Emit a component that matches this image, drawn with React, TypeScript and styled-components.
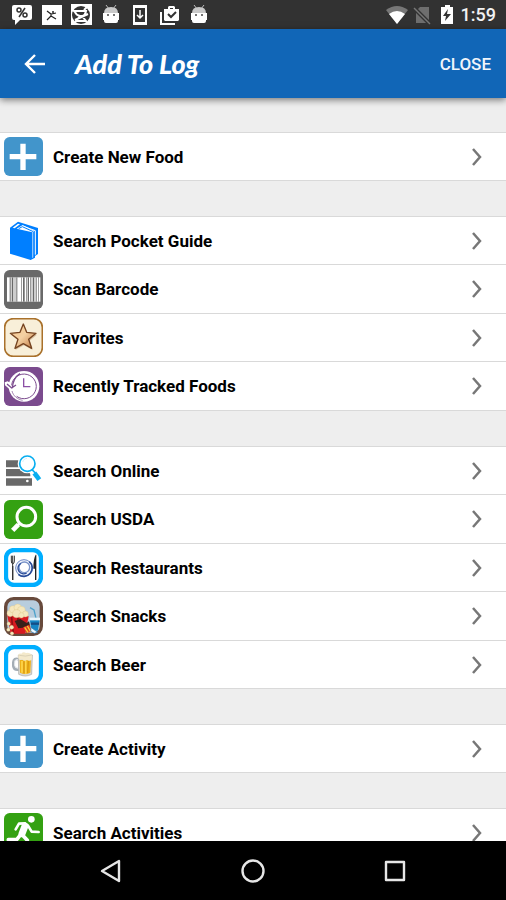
import React from 'react';
import styled, { createGlobalStyle } from 'styled-components';

const GlobalStyle = createGlobalStyle`
  * { box-sizing: border-box; }
  body { margin: 0; background: #000; font-family: Roboto, 'Liberation Sans', sans-serif; }
`;

const Screen = styled.div`
  display: flex;
  flex-direction: column;
  height: 100vh;
  background: #eeeeee;
`;

const StatusBar = styled.div`
  display: flex;
  flex: none;
  align-items: center;
  justify-content: space-between;
  height: 29px;
  padding: 0 10px 0 11px;
  background: #323232;
  color: #fff;
`;

const Notifications = styled.div`
  display: flex;
  justify-content: space-between;
  width: 199px;
`;

const SystemStatus = styled.div`
  display: flex;
  align-items: center;
  gap: 3px;
`;

const StatusIcon = styled.svg`
  display: block;
  width: 22px;
  height: 22px;
`;

const Clock = styled.time`
  font-size: 18px;
  line-height: 24px;
  font-weight: 500;
  color: #f2f2f2;
`;

const AppBar = styled.header`
  display: flex;
  flex: none;
  align-items: center;
  height: 69px;
  padding: 0 15px;
  background: #1166b7;
  color: #fff;
  box-shadow: 0 2px 7px rgba(0, 0, 0, 0.5);
  z-index: 1;
`;

const IconButton = styled.button`
  display: grid;
  place-items: center;
  width: 40px;
  height: 40px;
  padding: 0;
  border: 0;
  background: none;
  color: inherit;
  cursor: pointer;
`;

const Title = styled.h1`
  flex: 1;
  margin: 0 0 0 20px;
  font-family: Lato, 'Open Sans', sans-serif;
  font-size: 27px;
  line-height: 32px;
  font-weight: 900;
  font-style: italic;
`;

const CloseButton = styled.button`
  padding: 0;
  border: 0;
  background: none;
  color: #f0f5fb;
  font: 500 17px/24px Roboto, sans-serif;
  cursor: pointer;
`;

const Content = styled.main`
  display: flex;
  flex: 1;
  flex-direction: column;
  gap: 35px;
  min-height: 0;
  padding-top: 34px;
  overflow-y: auto;
  scrollbar-width: none;
`;

const Group = styled.ul`
  flex: none;
  margin: 0;
  padding: 0;
  list-style: none;
  background: #fff;
  border-top: 1px solid #d9d9d9;
`;

const Item = styled.li`
  height: 48px;
  border-bottom: 1px solid #d9d9d9;
  &:nth-child(even) { height: 49px; }
`;

const RowButton = styled.button`
  display: flex;
  align-items: center;
  width: 100%;
  height: 100%;
  padding: 0 24px 0 4px;
  border: 0;
  background: none;
  color: #000;
  text-align: left;
  cursor: pointer;
`;

const RowIcon = styled.svg`
  flex: none;
  width: 39px;
  height: 39px;
`;

const Label = styled.span`
  flex: 1;
  margin-left: 10px;
  font: 700 17px/24px Roboto, sans-serif;
`;

const NavBar = styled.nav`
  display: flex;
  flex: none;
  align-items: center;
  justify-content: space-around;
  height: 59px;
  padding: 0 40px;
  background: #000;
  color: #e6e6e6;
`;

const Tile = ({ fill, children }: { fill: string; children: React.ReactNode }) => (
  <RowIcon viewBox="0 0 117 117" aria-hidden="true">
    <rect width="117" height="117" rx="17" fill={fill} />
    {children}
  </RowIcon>
);

const FramedTile = ({ children }: { children: React.ReactNode }) => (
  <RowIcon viewBox="0 0 117 117" aria-hidden="true">
    <rect x="6" y="6" width="105" height="105" rx="24" fill="#fff" stroke="#00aeff" strokeWidth="13" />
    {children}
  </RowIcon>
);

const PlusIcon = () => (
  <Tile fill="#4295cb">
    <path d="M49 20h16v31h32v16H65v32H49V67H17V51h32z" fill="#fff" />
  </Tile>
);

const BookIcon = () => (
  <RowIcon viewBox="0 0 117 117" aria-hidden="true">
    <path d="M18 20 42 2 102 21V99L93 105V110L80 117 18 98Z" fill="#007fff" />
    <path d="M26 20 42 8 48 10 32 22ZM38 23 56 12 90 29 90 108 85 111 85 34Z" fill="#fff" />
    <path d="M48 22 59 16 94 29 94 101" fill="none" stroke="#fff" strokeWidth="3" />
    <path d="M44 23 55 17 88 32V111" fill="none" stroke="#007fff" strokeWidth="3" />
  </RowIcon>
);

const BarcodeIcon = () => (
  <Tile fill="#696969">
    <rect x="9" y="22" width="100" height="73" fill="#fff" />
    <g fill="#696969">
      {[[17, 3], [23, 5], [32, 2], [37, 3], [52, 2], [57, 5], [66, 2], [71, 4], [79, 3], [86, 5], [95, 3], [102, 2]].map(
        ([x, w]) => <rect key={x} x={x} y="22" width={w} height="73" />
      )}
    </g>
  </Tile>
);

const StarIcon = () => (
  <RowIcon viewBox="0 0 117 117" aria-hidden="true">
    <defs>
      <linearGradient id="star" x1="0" y1="0" x2="1" y2="1">
        <stop offset="0" stopColor="#f7c88e" />
        <stop offset=".5" stopColor="#f4d1a3" />
        <stop offset="1" stopColor="#bd7139" />
      </linearGradient>
    </defs>
    <rect x="2" y="2" width="113" height="113" rx="26" fill="#f8efd9" stroke="#a9712b" strokeWidth="5" />
    <path d="M61 23 72 47 99 50 77 68 86 96 60 82 34 96 44 68 21 50 49 47Z" fill="#c9ad88" opacity=".7" />
    <path d="M58 18 68 43 96 46 74 64 83 91 58 77 33 91 42 64 19 46 48 43Z" fill="url(#star)" stroke="#754421" strokeWidth="4" strokeLinejoin="round" />
  </RowIcon>
);

const HistoryIcon = () => (
  <Tile fill="#7b4b8e">
    <circle cx="60" cy="58" r="46" fill="#fff" />
    <path d="M2 46 11 43 19 48 32 36 36 63 22 71 3 55Z" fill="#fff" />
    <path d="M23 55A37 37 0 1 1 38 88" fill="none" stroke="#7b4b8e" strokeWidth="3" />
    <path d="M9 51 23 63 36 54M25 64C26 43 35 28 48 20" fill="none" stroke="#7b4b8e" strokeWidth="4" />
    <path d="M59 34V59H79" fill="none" stroke="#8b4fa5" strokeWidth="4" />
    <path d="M24 72C28 87 40 97 56 100" fill="none" stroke="#7b4b8e" strokeWidth="2" />
  </Tile>
);

const OnlineIcon = () => (
  <RowIcon viewBox="0 0 117 117" aria-hidden="true">
    <path d="M6 28H46V49H6ZM6 54H79V76H6ZM6 82H84V104H6Z" fill="#696969" />
    <circle cx="70" cy="90" r="4" fill="#fff" />
    <path d="M83 57 104 85" stroke="#fff" strokeWidth="21" />
    <circle cx="70" cy="38" r="29" fill="#fff" />
    <circle cx="70" cy="38" r="23" fill="#fff" stroke="#08aef0" strokeWidth="5" />
    <path d="M56 33C58 26 63 23 69 22" fill="none" stroke="#bce9fb" strokeWidth="2" />
    <path d="M84 56 94 66" stroke="#08aef0" strokeWidth="5" />
    <path d="M91 66 106 86" stroke="#08aef0" strokeWidth="14" />
  </RowIcon>
);

const MagnifierIcon = () => (
  <Tile fill="#34a112">
    <circle cx="67" cy="50" r="28" fill="none" stroke="#fff" strokeWidth="9" />
    <path d="M48 69 39 78" stroke="#fff" strokeWidth="8" />
    <path d="M43 74 26 91" stroke="#fff" strokeWidth="14" />
  </Tile>
);

const RestaurantIcon = () => (
  <FramedTile>
    <path d="M22 23V39Q22 47 26 48Q31 47 31 39V23M26 23V96" fill="none" stroke="#333" strokeWidth="3" />
    <path d="M26 54V96" stroke="#333" strokeWidth="4" />
    <circle cx="60" cy="60" r="25" fill="#f1f4fc" stroke="#6f89c5" strokeWidth="3" />
    <path d="M76 41A25 25 0 1 1 43 79" fill="none" stroke="#294b98" strokeWidth="5" />
    <circle cx="61" cy="58" r="16" fill="#fff" stroke="#7993c8" strokeWidth="4" />
    <path d="M50 46A17 17 0 0 0 68 75" fill="none" stroke="#294b98" strokeWidth="4" />
    <path d="M95 20Q88 32 88 62H93V96H97V20Z" fill="#222" />
  </FramedTile>
);

const SnacksIcon = () => (
  <RowIcon viewBox="0 0 117 117" aria-hidden="true">
    <rect x="5" y="5" width="107" height="107" rx="24" fill="#b8cddd" stroke="#684a3c" strokeWidth="10" />
    <path d="M78 32 90 39 96 64" fill="none" stroke="#4da2cb" strokeWidth="4" />
    <path d="M9 50 74 58 64 110H20Z" fill="#d71920" />
    <path d="M22 55 28 109M42 57 41 82" stroke="#8f1014" strokeWidth="5" />
    <g fill="#f5e8be" stroke="#d9be80" strokeWidth="1">
      <circle cx="19" cy="49" r="10" /><circle cx="27" cy="37" r="11" /><circle cx="41" cy="32" r="11" />
      <circle cx="52" cy="40" r="12" /><circle cx="64" cy="51" r="9" /><circle cx="38" cy="50" r="12" />
      <circle cx="52" cy="55" r="8" /><circle cx="14" cy="80" r="5" /><circle cx="23" cy="91" r="6" />
      <circle cx="13" cy="98" r="5" /><circle cx="24" cy="109" r="5" />
    </g>
    <path d="M77 66H107L102 101H83Z" fill="#1685c4" />
    <path d="M76 62H108V70H76Z" fill="#e8f5fc" />
    <path d="M81 80H105" stroke="#154d87" strokeWidth="7" />
    <path d="M32 72 49 66 68 78 75 73 79 90 68 96 56 92 43 94Z" fill="#382019" />
    <path d="M57 91 76 83 84 104 67 108Z" fill="#e33b20" />
    <path d="M62 91 72 106M70 87 80 104" stroke="#f8cf32" strokeWidth="4" />
    <path d="M81 91 101 106 91 109 80 103Z" fill="#eef8ff" stroke="#186eac" strokeWidth="2" />
  </RowIcon>
);

const BeerIcon = () => (
  <FramedTile>
    <path d="M44 43Q29 37 28 52V63Q30 76 44 74" fill="none" stroke="#a4adb5" strokeWidth="8" />
    <path d="M44 44Q32 41 32 52V62Q33 70 44 69" fill="none" stroke="#e5e9ec" strokeWidth="3" />
    <path d="M43 30H85L83 88Q64 98 44 88Z" fill="#d8d9d7" stroke="#a9a7a0" strokeWidth="2" />
    <path d="M47 45H81L79 83Q64 91 48 83Z" fill="#eeb21b" />
    <path d="M54 48V83M65 48V87" stroke="#ffd74d" strokeWidth="5" />
    <path d="M60 49V85M73 48 71 84" stroke="#c98209" strokeWidth="2" />
    <path d="M43 32Q42 24 52 26Q58 19 66 24Q78 20 84 31L83 45Q75 50 69 45Q59 51 55 43Q47 47 43 40Z" fill="#f4e9cb" />
    <path d="M46 31Q64 36 83 30" fill="none" stroke="#cfc5aa" strokeWidth="2" />
  </FramedTile>
);

const RunnerIcon = () => (
  <Tile fill="#34a112">
    <circle cx="82" cy="19" r="10" fill="#fff" />
    <g fill="none" stroke="#fff" strokeLinecap="round" strokeLinejoin="round">
      <path d="M63 39 54 62" strokeWidth="21" />
      <path d="M63 31 45 32 35 49M72 38 83 56 104 57" strokeWidth="8" />
      <path d="M50 65 38 80 13 80M56 67 70 82 66 108" strokeWidth="11" />
    </g>
  </Tile>
);

const AndroidIcon = () => (
  <StatusIcon viewBox="0 0 22 22" aria-hidden="true">
    <path d="m6 1 3 4M16 1l-3 4" stroke="#bbb" strokeWidth="1" />
    <path d="M4 9Q4 3 11 3T18 9Z" fill="#c9c9c9" />
    <path d="M3 9H19V16H18V17Q18 19 16 19H6Q4 19 4 17V16H3Z" fill="#fff" />
    <circle cx="8" cy="11" r="1" fill="#444" /><circle cx="14" cy="11" r="1" fill="#444" />
  </StatusIcon>
);

const groups: { label: string; Icon: React.FC }[][] = [
  [{ label: 'Create New Food', Icon: PlusIcon }],
  [
    { label: 'Search Pocket Guide', Icon: BookIcon },
    { label: 'Scan Barcode', Icon: BarcodeIcon },
    { label: 'Favorites', Icon: StarIcon },
    { label: 'Recently Tracked Foods', Icon: HistoryIcon },
  ],
  [
    { label: 'Search Online', Icon: OnlineIcon },
    { label: 'Search USDA', Icon: MagnifierIcon },
    { label: 'Search Restaurants', Icon: RestaurantIcon },
    { label: 'Search Snacks', Icon: SnacksIcon },
    { label: 'Search Beer', Icon: BeerIcon },
  ],
  [{ label: 'Create Activity', Icon: PlusIcon }],
  [{ label: 'Search Activities', Icon: RunnerIcon }],
];

export default function App() {
  return (
    <Screen>
      <GlobalStyle />
      <StatusBar>
        <Notifications>
          <StatusIcon viewBox="0 0 22 22" aria-hidden="true">
            <path d="M3 1H19Q21 1 21 3V14Q21 16 19 16H9L4 21V16H3Q1 16 1 14V3Q1 1 3 1Z" fill="#fff" />
            <g fill="none" stroke="#333" strokeWidth="1.5"><circle cx="8" cy="6" r="2" /><circle cx="14" cy="11" r="2" /><path d="M14 4 8 13" /></g>
          </StatusIcon>
          <StatusIcon viewBox="0 0 22 22" aria-hidden="true">
            <path d="M1 1H21V21H1Z" fill="#fff" />
            <path d="M6 7 10 10 15 9M10 10 10 12 6 16M10 12 15 15" fill="none" stroke="#222" strokeWidth="1.2" />
            <circle cx="12" cy="8" r="1" fill="#222" />
          </StatusIcon>
          <StatusIcon viewBox="0 0 22 22" aria-hidden="true">
            <path d="M1 0H22V21H1Z" fill="#fff" />
            <circle cx="11" cy="11" r="9" fill="#333" />
            <path d="M4 7H16Q15 12 12 12L16 17H6L10 12Q6 11 5 8ZM14 6 17 3M5 16 18 10" fill="none" stroke="#fff" strokeWidth="2" />
          </StatusIcon>
          <AndroidIcon />
          <StatusIcon viewBox="0 0 22 22" aria-hidden="true">
            <path d="M4 1H18V21H4Z" fill="#fff" /><path d="M6 4H16V18H6Z" fill="#333" />
            <path d="M11 6V14M8 11 11 14 14 11" fill="none" stroke="#fff" strokeWidth="1.5" />
          </StatusIcon>
          <StatusIcon viewBox="0 0 22 22" aria-hidden="true">
            <path d="M2 8V20H16" fill="none" stroke="#fff" strokeWidth="2" />
            <path d="M5 5H9V3L10 2H15L16 3V5H20V16L19 17H6L5 16ZM11 4V5H14V4Z" fill="#fff" fillRule="evenodd" />
            <path d="M9 10 12 13 17 8" fill="none" stroke="#333" strokeWidth="2" />
          </StatusIcon>
          <AndroidIcon />
        </Notifications>
        <SystemStatus>
          <StatusIcon viewBox="0 0 22 22" aria-hidden="true">
            <path d="M0 6Q11 -2 22 6L11 20Z" fill="#777" /><path d="M3 10Q11 4 19 10L11 20Z" fill="#fff" />
          </StatusIcon>
          <StatusIcon viewBox="0 0 22 22" aria-hidden="true">
            <path d="M9 3H18V19H5V7Z" fill="#6e6e6e" /><path d="M3 4 19 20" stroke="#323232" strokeWidth="4" /><path d="M3 4 19 20" stroke="#777" strokeWidth="1.5" />
          </StatusIcon>
          <StatusIcon viewBox="0 0 22 22" aria-hidden="true">
            <path d="M5 3H9V1H14V3H17V20H5Z" fill="#fff" /><path d="M12 5 7 12H10L9 17 15 10H11Z" fill="#333" />
          </StatusIcon>
          <Clock>1:59</Clock>
        </SystemStatus>
      </StatusBar>
      <AppBar>
        <IconButton aria-label="Back">
          <svg width="22" height="22" viewBox="0 0 22 22" fill="none" stroke="currentColor" strokeWidth="2.4"><path d="M21 11H3M11 2 2 11 11 20" /></svg>
        </IconButton>
        <Title>Add To Log</Title>
        <CloseButton>CLOSE</CloseButton>
      </AppBar>
      <Content>
        {groups.map((items) => (
          <Group key={items[0].label}>
            {items.map(({ label, Icon }) => (
              <Item key={label}>
                <RowButton>
                  <Icon />
                  <Label>{label}</Label>
                  <svg width="10" height="18" viewBox="0 0 10 18" fill="none" stroke="#777" strokeWidth="2.5" aria-hidden="true"><path d="M1 1 8 9 1 17" /></svg>
                </RowButton>
              </Item>
            ))}
          </Group>
        ))}
      </Content>
      <NavBar>
        <IconButton aria-label="System back">
          <svg width="24" height="24" viewBox="0 0 24 24" fill="none" stroke="currentColor" strokeWidth="2.4" strokeLinejoin="round"><path d="M20 2V22L3 12Z" /></svg>
        </IconButton>
        <IconButton aria-label="Home">
          <svg width="24" height="24" viewBox="0 0 24 24" fill="none" stroke="currentColor" strokeWidth="2.4"><circle cx="12" cy="12" r="10.5" /></svg>
        </IconButton>
        <IconButton aria-label="Recent apps">
          <svg width="24" height="24" viewBox="0 0 24 24" fill="none" stroke="currentColor" strokeWidth="2.4" strokeLinejoin="round"><rect x="3" y="3" width="18" height="18" /></svg>
        </IconButton>
      </NavBar>
    </Screen>
  );
}
